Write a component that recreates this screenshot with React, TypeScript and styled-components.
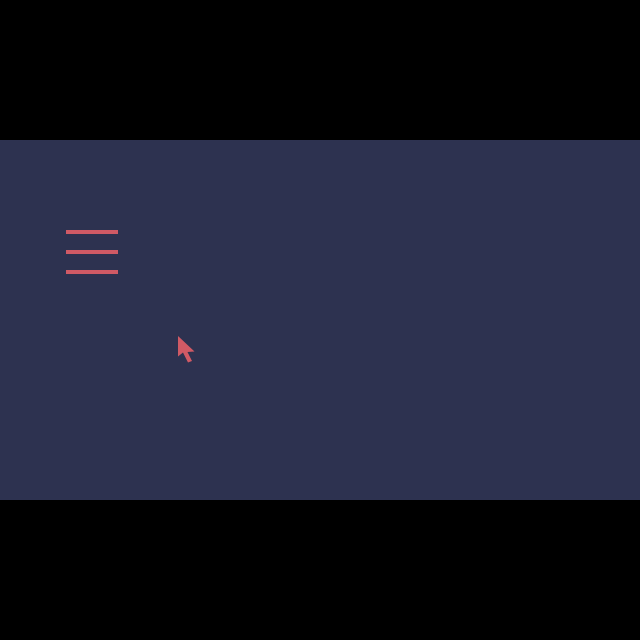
import React from "react";
import styled, { createGlobalStyle } from "styled-components";

const Global = createGlobalStyle`
  html, body { margin: 0; padding: 0; background: #000; }
  body { font-family: "Liberation Sans", Arial, sans-serif; }
`;

const Screen = styled.div`
  width: 640px;
  height: 640px;
  background: #000;
  display: flex;
  flex-direction: column;
  justify-content: center;
`;

const Panel = styled.div`
  position: relative;
  height: 360px;
  background: #2d3250;
  padding: 90px 0 0 66px;
  box-sizing: border-box;
`;

const MenuButton = styled.div`
  display: flex;
  flex-direction: column;
  gap: 16px;
  width: 52px;
`;

const Bar = styled.span`
  display: block;
  height: 4px;
  width: 52px;
  background: #d05a65;
`;

const Pointer = styled.svg`
  position: absolute;
  left: 178px;
  top: 196px;
  width: 17px;
  height: 27px;
`;

export default function App() {
  return (
    <>
      <Global />
      <Screen>
        <Panel>
          <MenuButton aria-label="menu">
            <Bar />
            <Bar />
            <Bar />
          </MenuButton>
          <Pointer viewBox="0 0 17 27">
            <path d="M0 0 L0 20.5 L5 16.5 L10 26.5 L14 25 L9.5 16 L16.5 15.5 Z" fill="#d05a65" />
          </Pointer>
        </Panel>
      </Screen>
    </>
  );
}
